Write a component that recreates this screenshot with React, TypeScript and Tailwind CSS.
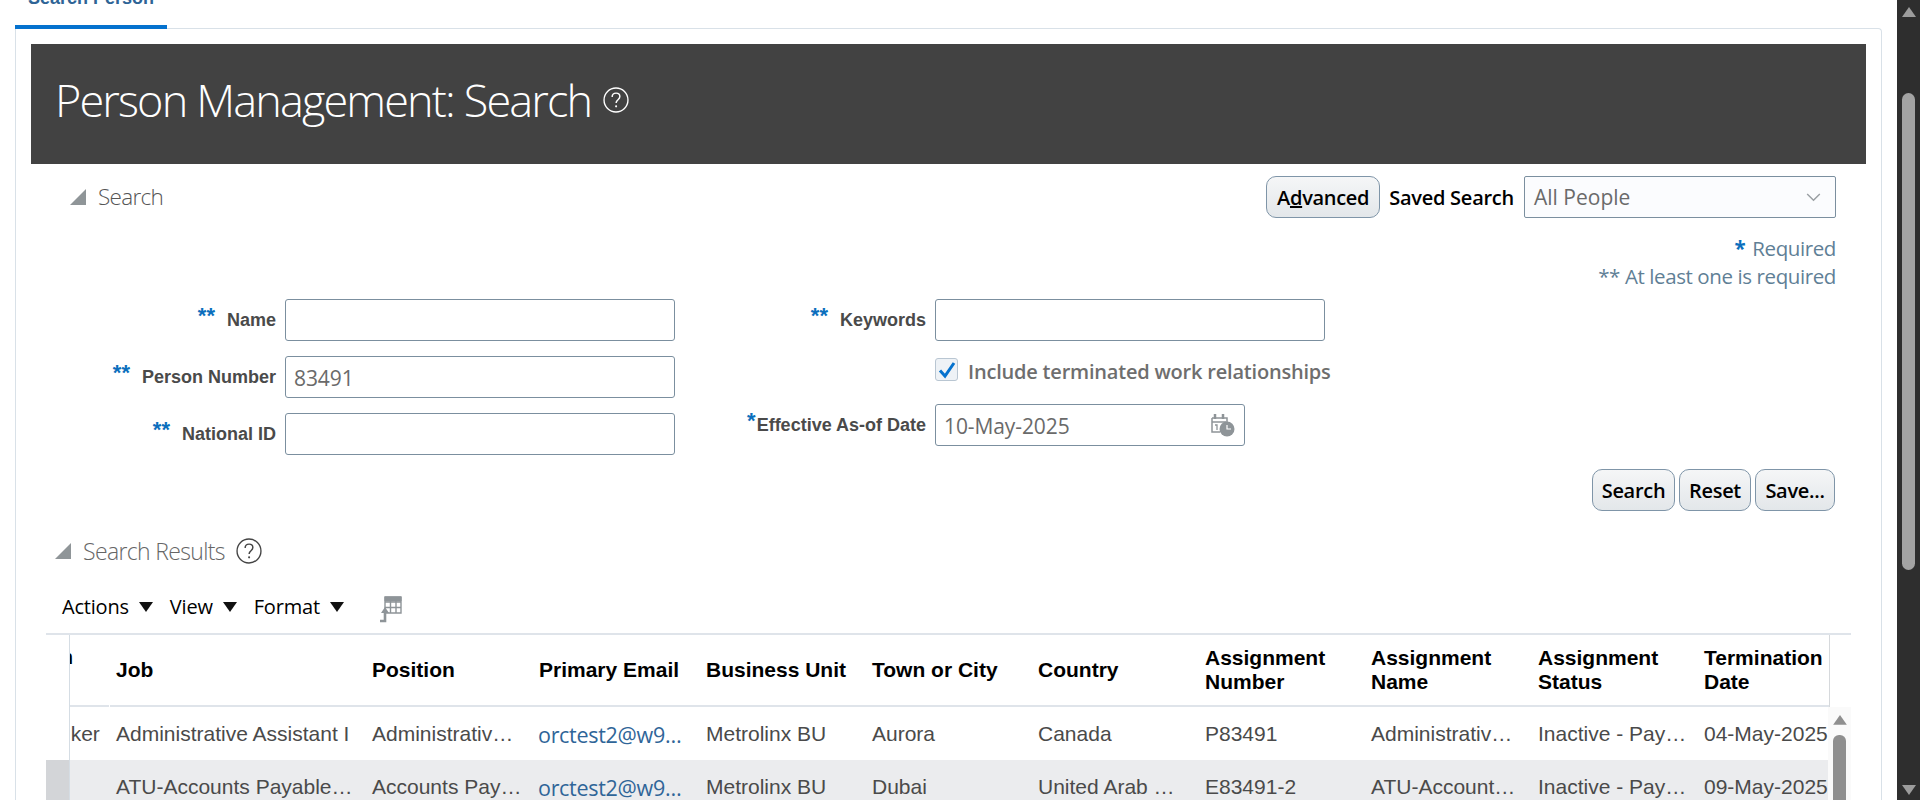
import React from "react";

const SEGOE = "font-['Open_Sans',sans-serif]";
const ARIAL = "font-['Liberation_Sans',Arial,sans-serif]";

const Tri = ({ className }: { className: string }) => (
  <svg viewBox="0 0 16 16" className={className}>
    <polygon points="16,0 16,16 0,16" fill="#8f9598" />
  </svg>
);

const Help = ({ className, color }: { className: string; color: string }) => (
  <svg viewBox="0 0 25 25" className={className} fill="none" stroke={color}>
    <circle cx="12.5" cy="12.5" r="11.5" strokeWidth="1.3" />
    <path d="M8.8 9.6c0-2.3 1.7-3.7 3.8-3.7s3.6 1.3 3.6 3.3c0 3.1-3.6 3-3.6 6.2" strokeWidth="1.4" />
    <circle cx="12.6" cy="18.6" r="1" fill={color} stroke="none" />
  </svg>
);

const Btn = ({ children, w }: { children: React.ReactNode; w: string }) => (
  <button className={`${w} h-[42px] pt-[2px] rounded-[10px] border border-[#7f95a8] bg-gradient-to-b from-[#f5f6f7] to-[#e3e7ea] text-[20px] font-semibold tracking-[-0.3px] text-black ${SEGOE}`}>
    {children}
  </button>
);

const Label = ({ stars, text, gap }: { stars: string; text: string; gap: string }) => (
  <div className={`flex items-center justify-end ${ARIAL}`}>
    <span className={`text-[22px] leading-none font-bold text-[#0b6fbd] -translate-y-[4px] ${gap}`}>{stars}</span>
    <span className="text-[18px] font-bold text-[#4a4a4a] whitespace-nowrap">{text}</span>
  </div>
);

const Input = ({ w, value, children }: { w: string; value?: string; children?: React.ReactNode }) => (
  <div className={`${w} h-[42px] shrink-0 rounded-[3px] border border-[#7b8f9f] bg-white flex items-center justify-between pl-[8px] pr-[9px] text-[21px] tracking-[-0.1px] text-[#6a6a6a] ${SEGOE}`}>
    <span className="pt-[3px]">{value}</span>
    {children}
  </div>
);

const headers: [string, string?][] = [
  ["Job"],
  ["Position"],
  ["Primary Email"],
  ["Business Unit"],
  ["Town or City"],
  ["Country"],
  ["Assignment", "Number"],
  ["Assignment", "Name"],
  ["Assignment", "Status"],
  ["Termination", "Date"],
];

const widths = ["w-[256px]", "w-[167px]", "w-[167px]", "w-[166px]", "w-[166px]", "w-[167px]", "w-[166px]", "w-[167px]", "w-[166px]", "w-[132px]"];

const rows = [
  ["Administrative Assistant I", "Administrativ…", "orctest2@w9…", "Metrolinx BU", "Aurora", "Canada", "P83491", "Administrativ…", "Inactive - Pay…", "04-May-2025"],
  ["ATU-Accounts Payable…", "Accounts Pay…", "orctest2@w9…", "Metrolinx BU", "Dubai", "United Arab …", "E83491-2", "ATU-Account…", "Inactive - Pay…", "09-May-2025"],
];

export default function App() {
  return (
    <div className={`flex h-[800px] w-[1920px] overflow-hidden bg-white ${ARIAL}`}>
      <main className="w-[1897px] h-[800px] overflow-hidden">
        <div className="h-[28px] pl-[15px]">
          <div className="relative z-10 w-[152px] h-[29px] border-b-[4px] border-[#0572ce] overflow-hidden flex items-end justify-center pb-[17px]">
            <span className="text-[18px] leading-[20px] font-bold text-[#2e6496] whitespace-nowrap">Search Person</span>
          </div>
        </div>

        <div className="ml-[15px] w-[1867px] h-[772px] border border-b-0 border-[#d9e1e8] rounded-tr-[4px] pt-[15px] pl-[15px] pr-[15px]">
          <div className="h-[120px] w-[1835px] bg-[#424242] flex items-center pl-[24px] pb-[9px] gap-[12px]">
            <h1 className="text-[45px] leading-none font-light text-white tracking-[-1.85px] font-['Open_Sans',sans-serif]">Person Management: Search</h1>
            <Help className="w-[26px] h-[26px]" color="#ffffff" />
          </div>

          <div className="mt-[12px] h-[42px] flex items-center justify-between pl-[39px] pr-[30px]">
            <div className="flex items-center gap-[12px]">
              <Tri className="w-[16px] h-[16px]" />
              <span className={`text-[22.5px] font-light tracking-[-0.7px] text-[#555] ${SEGOE}`}>Search</span>
            </div>
            <div className="flex items-center">
              <Btn w="w-[114px]"><span>A<span className="underline">d</span>vanced</span></Btn>
              <span className={`ml-[9px] mr-[10px] pt-[2px] text-[20px] font-semibold tracking-[-0.25px] text-black ${SEGOE}`}>Saved Search</span>
              <div className={`w-[312px] h-[42px] rounded-[2px] border border-[#7b8f9f] bg-[#fbfcfe] flex items-center justify-between pl-[9px] pr-[14px] text-[21px] text-[#6a6a6a] ${SEGOE}`}>
                <span className="pt-[2px]">All People</span>
                <svg viewBox="0 0 16 10" className="w-[15px] h-[9px]" fill="none" stroke="#9a9fa3" strokeWidth="1.6">
                  <path d="M1 1l7 7 7-7" />
                </svg>
              </div>
            </div>
          </div>

          <div className={`mt-[16px] pr-[30px] text-right text-[20.5px] leading-[28px] font-normal tracking-[-0.4px] text-[#5f7f96] ${SEGOE}`}>
            <div><span className="font-bold text-[#0b6fbd] mr-[7px]">*</span>Required</div>
            <div>** At least one is required</div>
          </div>

          <div className="mt-[9px] flex">
            <div className="w-[644px] flex flex-col gap-[15px]">
              {[
                { t: "Name" },
                { t: "Person Number", v: "83491" },
                { t: "National ID" },
              ].map((r) => (
                <div key={r.t} className="flex items-center justify-end gap-[9px]">
                  <Label stars="**" text={r.t} gap="mr-[12px]" />
                  <Input w="w-[390px]" value={r.v} />
                </div>
              ))}
            </div>
            <div className="flex flex-col">
              <div className="w-[650px] flex items-center justify-end gap-[9px]">
                <Label stars="**" text="Keywords" gap="mr-[12px]" />
                <Input w="w-[390px]" />
              </div>
              <div className={`mt-[17px] ml-[260px] flex items-center h-[23px] text-[20px] font-semibold tracking-[-0.2px] text-[#6e6e6e] whitespace-nowrap ${SEGOE}`}>
                <span className="w-[23px] h-[23px] rounded-[3px] border border-[#b9c6d2] bg-[#eef2f6] flex items-center justify-center mr-[10px]">
                  <svg viewBox="0 0 20 20" className="w-[20px] h-[20px]" fill="none" stroke="#0572ce" strokeWidth="3">
                    <path d="M3 10.5l5 5.5 9-13" />
                  </svg>
                </span>
                <span className="pt-[5px]">Include terminated work relationships</span>
              </div>
              <div className="mt-[23px] flex items-center">
                <div className={`w-[260px] pr-[9px] flex items-center justify-end ${ARIAL}`}>
                  <span className="text-[22px] leading-none font-bold text-[#0b6fbd] -translate-y-[4px] mr-[1px]">*</span>
                  <span className="text-[18px] font-bold text-[#4a4a4a] whitespace-nowrap">Effective As-of Date</span>
                </div>
                <Input w="w-[310px]" value="10-May-2025">
                  <svg viewBox="0 0 25 24" className="w-[25px] h-[24px]" fill="none">
                    <path d="M2 5h15v5M2 5v14h8M2 9h14" stroke="#8e9498" strokeWidth="1.5" />
                    <path d="M5 1v5M13 1v5" stroke="#8e9498" strokeWidth="2.5" />
                    <path d="M5 12h2v5" stroke="#8e9498" strokeWidth="1.3" />
                    <circle cx="17" cy="16" r="7.5" fill="#8e9498" />
                    <path d="M17 12v4h4" stroke="#fff" strokeWidth="1.2" />
                  </svg>
                </Input>
              </div>
            </div>
          </div>

          <div className="mt-[14px] pr-[31px] flex justify-end gap-[4px]">
            <Btn w="w-[83px]">Search</Btn>
            <Btn w="w-[72px]">Reset</Btn>
            <Btn w="w-[80px]">Save...</Btn>
          </div>

          <div className="mt-[27px] h-[26px] pl-[24px] flex items-center">
            <Tri className="w-[16px] h-[16px]" />
            <span className={`ml-[12px] text-[23px] font-light tracking-[-0.65px] text-[#666] ${SEGOE}`}>Search Results</span>
            <Help className="ml-[11px] w-[26px] h-[26px]" color="#444444" />
          </div>

          <div className={`mt-[27px] h-[32px] pl-[31px] flex items-center text-[20px] tracking-[-0.2px] text-black ${SEGOE}`}>
            {["Actions", "View", "Format"].map((t) => (
              <div key={t} className="flex items-center mr-[17px]">
                <span>{t}</span>
                <svg viewBox="0 0 14 10" className="ml-[10px] w-[14px] h-[10px]"><polygon points="0,0 14,0 7,10" fill="#111" /></svg>
              </div>
            ))}
            <svg viewBox="0 0 24 30" className="ml-[17px] mt-[4px] w-[24px] h-[30px]" fill="none" stroke="#8e9498">
              <path d="M7 3h16v16H7zM7 8h16M7 13.500h16M12.500 3v16M18 3v16" strokeWidth="1.4" />
              <path d="M7 3h16v4H7z" fill="#8e9498" />
              <path d="M2 27h5v-9" strokeWidth="2.600" />
              <polygon points="3,19 7,13 11,19" fill="#8e9498" stroke="none" />
            </svg>
          </div>

          <div className={`mt-[10px] ml-[15px] w-[1805px] border-t-2 border-[#dfe4ea] ${ARIAL}`}>
            <div className="flex h-[72px]">
              <div className="w-[24px] border-r border-[#d5dde4]" />
              <div className="w-[39px] border-b-2 border-[#dfe4ea] overflow-hidden flex items-start pt-[10px]">
                <div className="w-[3px] overflow-hidden flex justify-end text-[21px] leading-[24px] font-bold text-black shrink-0">
                  <span className="shrink-0">n</span>
                </div>
              </div>
              {headers.map(([a, b], i) => (
                <div key={a + i} className={`${widths[i]} ml-[1px] -mr-[1px] shrink-0 border-b-2 border-[#dfe4ea] pl-[6px] flex flex-col justify-center text-[21px] leading-[24px] font-bold text-black`}>
                  <span>{a}</span>
                  {b && <span>{b}</span>}
                </div>
              ))}
              <div className="border-l border-[#d6d9dc]" />
            </div>

            <div className="flex">
              <div className="w-[1782px] flex flex-col">
                {rows.map((r, ri) => (
                  <div key={ri} className={`flex h-[53px] ${ri === 1 ? "bg-[#ebecee]" : ""}`}>
                    <div className={`w-[24px] border-r border-[#d5dde4] ${ri === 1 ? "bg-[#d3d5d8]" : ""}`} />
                    <div className="w-[39px] pl-[1px] flex items-center text-[21px] text-[#4a4a4a]">{ri === 0 ? "ker" : ""}</div>
                    {r.map((c, i) => (
                      <div key={i} className={`${widths[i]} shrink-0 flex items-center whitespace-nowrap ${i === 2 ? `pl-[7px] text-[#2f6598] text-[21.5px] font-medium tracking-[-0.3px] pt-[4px] ${SEGOE}` : "pl-[8px] text-[21px] text-[#4a4a4a]"}`}>
                        {c}
                      </div>
                    ))}
                  </div>
                ))}
              </div>
              <div className="w-[23px] h-[106px] bg-[#fafafa] flex flex-col items-center pt-[8px]">
                <svg viewBox="0 0 14 10" className="w-[14px] h-[10px]"><polygon points="7,0 14,10 0,10" fill="#8f8f8f" /></svg>
                <div className="mt-[10px] w-[13px] h-[80px] rounded-t-[6px] bg-[#8f8f8f]" />
              </div>
            </div>
          </div>
        </div>
      </main>

      <aside className="w-[23px] h-[800px] bg-[#2e2e2e] flex flex-col items-center pt-[7px] pb-[5px]">
        <svg viewBox="0 0 14 10" className="w-[14px] h-[10px]"><polygon points="7,0 14,10 0,10" fill="#9c9c9c" /></svg>
        <div className="mt-[76px] w-[13px] h-[477px] rounded-full bg-[#a3a3a3]" />
        <svg viewBox="0 0 14 10" className="mt-auto w-[14px] h-[10px]"><polygon points="0,0 14,0 7,10" fill="#9c9c9c" /></svg>
      </aside>
    </div>
  );
}
